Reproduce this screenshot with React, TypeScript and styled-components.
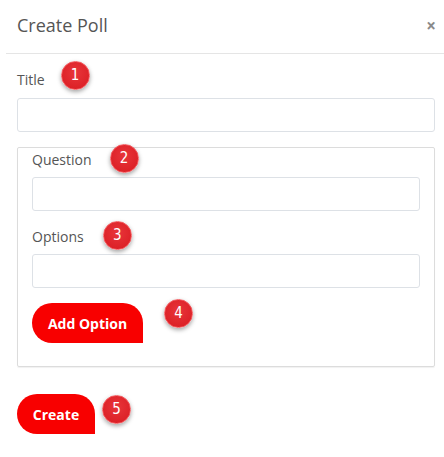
import React from "react";
import styled, { createGlobalStyle } from "styled-components";

const Global = createGlobalStyle`
  html, body { margin: 0; padding: 0; background: #fff; }
  body { font-family: "Open Sans", "Liberation Sans", sans-serif; }
  * { box-sizing: border-box; }
`;

const Modal = styled.div`
  width: 438px;
  margin-left: 6px;
  background: #fff;
`;

const Header = styled.div`
  display: flex;
  align-items: center;
  justify-content: space-between;
  height: 54px;
  padding: 0 8px 4px 11px;
  border-bottom: 1px solid #e5e5e5;
`;

const Heading = styled.h4`
  margin: 0;
  font-size: 18px;
  font-weight: 400;
  color: #555;
  line-height: 24px;
`;

const Close = styled.span`
  font-size: 17px;
  font-weight: 700;
  color: #8a8a8a;
  line-height: 1;
  margin-top: 1px;
`;

const Body = styled.div`
  padding: 17px 9px 0 11px;
  display: flex;
  flex-direction: column;
`;

const LabelRow = styled.div<{ $mb: number }>`
  display: flex;
  align-items: center;
  height: 18px;
  margin-bottom: ${(p) => p.$mb}px;
`;

const Label = styled.label`
  font-size: 14px;
  line-height: 18px;
  color: #555;
`;

const Input = styled.input`
  display: block;
  width: 100%;
  height: 34px;
  border: 1px solid #dde1e6;
  border-radius: 3px;
  background: #fff;
  outline: none;
  padding: 6px 10px;
  font: inherit;
`;

const Box = styled.div`
  margin-top: 15px;
  border: 1px solid #dcdcdc;
  border-radius: 2px;
  box-shadow: 0 1px 1px rgba(0, 0, 0, 0.06);
  padding: 3px 14px 23px 14px;
  display: flex;
  flex-direction: column;
`;

const Group = styled.div<{ $gap?: number }>`
  margin-top: ${(p) => p.$gap ?? 0}px;
`;

const ButtonRow = styled.div<{ $gap: number }>`
  display: flex;
  align-items: center;
  margin-top: ${(p) => p.$gap}px;
`;

const RedButton = styled.button<{ $w: number }>`
  width: ${(p) => p.$w}px;
  height: 40px;
  border: none;
  background: #f80000;
  color: #fff;
  font-family: "Open Sans", "Liberation Sans", sans-serif;
  font-weight: 700;
  font-size: 14px;
  border-radius: 20px 20px 0 20px;
  padding: 0;
  cursor: pointer;
`;

const Badge = styled.span<{ $ml: number; $dy?: number }>`
  position: relative;
  top: ${(p) => p.$dy ?? 0}px;
  margin-left: ${(p) => p.$ml}px;
  width: 29px;
  height: 29px;
  border-radius: 50%;
  background: radial-gradient(circle at 50% 40%, #e8353a 0%, #dc2127 75%);
  border: 1px solid #f25a5e;
  box-shadow: 0 2px 4px rgba(0, 0, 0, 0.35);
  color: #fff;
  display: inline-flex;
  align-items: center;
  justify-content: center;
  font-family: "DejaVu Sans Condensed", "DejaVu Sans", sans-serif;
  font-size: 15px;
  line-height: 1;
  flex: none;
`;

export default function App() {
  return (
    <>
      <Global />
      <Modal>
        <Header>
          <Heading>Create Poll</Heading>
          <Close>×</Close>
        </Header>
        <Body>
          <LabelRow $mb={9}>
            <Label>Title</Label>
            <Badge $ml={16} $dy={-5}>1</Badge>
          </LabelRow>
          <Input />
          <Box>
            <Group>
              <LabelRow $mb={8}>
                <Label>Question</Label>
                <Badge $ml={18} $dy={-2}>2</Badge>
              </LabelRow>
              <Input />
            </Group>
            <Group $gap={17}>
              <LabelRow $mb={8}>
                <Label>Options</Label>
                <Badge $ml={19} $dy={-2}>3</Badge>
              </LabelRow>
              <Input />
            </Group>
            <ButtonRow $gap={15}>
              <RedButton $w={111}>Add Option</RedButton>
              <Badge $ml={21} $dy={-10}>4</Badge>
            </ButtonRow>
          </Box>
          <ButtonRow $gap={27}>
            <RedButton $w={78}>Create</RedButton>
            <Badge $ml={7} $dy={-5}>5</Badge>
          </ButtonRow>
        </Body>
      </Modal>
    </>
  );
}
